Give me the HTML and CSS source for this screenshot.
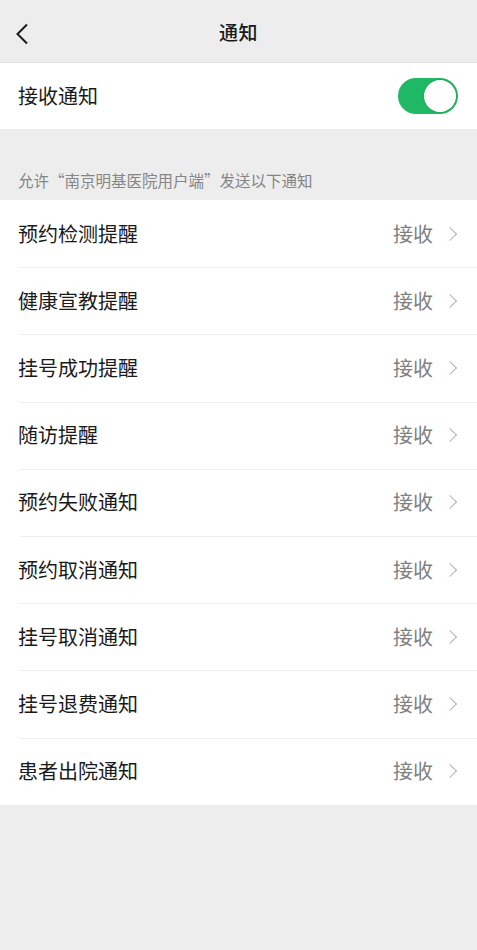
FILE: index.html
```html
<!DOCTYPE html>
<html>
<head>
  <meta charset="utf-8">
  <title>通知</title>
  <link rel="stylesheet" href="styles.css">
</head>
<body>
  <!-- Top bar -->
  <div class="topbar">
    <svg class="back" width="14" height="22" viewBox="0 0 14 22">
      <path d="M12 1.5 L2.5 11 L12 20.5" fill="none" stroke="#1a1a1a" stroke-width="2"/>
    </svg>
    <div class="title">通知</div>
  </div>

  <!-- Master switch -->
  <div class="switch-row">
    <span class="label">接收通知</span>
    <div class="toggle on"><div class="knob"></div></div>
  </div>

  <div class="caption">允许“南京明基医院用户端”发送以下通知</div>

  <!-- Notification list -->
  <div class="list">
    <div class="item"><span class="label">预约检测提醒</span><span class="value">接收</span><span class="arrow"></span></div>
    <div class="item"><span class="label">健康宣教提醒</span><span class="value">接收</span><span class="arrow"></span></div>
    <div class="item"><span class="label">挂号成功提醒</span><span class="value">接收</span><span class="arrow"></span></div>
    <div class="item"><span class="label">随访提醒</span><span class="value">接收</span><span class="arrow"></span></div>
    <div class="item"><span class="label">预约失败通知</span><span class="value">接收</span><span class="arrow"></span></div>
    <div class="item"><span class="label">预约取消通知</span><span class="value">接收</span><span class="arrow"></span></div>
    <div class="item"><span class="label">挂号取消通知</span><span class="value">接收</span><span class="arrow"></span></div>
    <div class="item"><span class="label">挂号退费通知</span><span class="value">接收</span><span class="arrow"></span></div>
    <div class="item"><span class="label">患者出院通知</span><span class="value">接收</span><span class="arrow"></span></div>
  </div>
</body>
</html>
```

FILE: styles.css
```css
/* notification settings page */
body {
  margin: 0;
  background-color: #ededed;
  font-family: "Noto Sans CJK SC", "Noto Sans", sans-serif;
  color: #1a1a1a;
}
.topbar {
  height: 62px;
  display: flex;
  align-items: center;
  justify-content: center;
  position: relative;
  border-bottom: 1px solid #e0e0e0;
}
.back {
  position: absolute;
  left: 15px;
  top: 23px;
}
.title {
  font-size: 19px;
  font-weight: 500;
  letter-spacing: 0.5px;
}
.switch-row {
  height: 66px;
  background-color: #fff;
  display: flex;
  align-items: center;
  justify-content: space-between;
  padding: 0 19px 0 18px;
}
.label {
  font-size: 20px;
  line-height: 1;
}
.toggle {
  width: 60px;
  height: 36px;
  border-radius: 18px;
  background-color: #e5e5e5;
  display: flex;
  align-items: center;
  padding: 0 2px;
  box-sizing: border-box;
}
.toggle.on {
  background-color: #1fb864;
  justify-content: flex-end;
}
.knob {
  width: 32px;
  height: 32px;
  border-radius: 50%;
  background-color: #fff;
  box-shadow: 0 0 0 1px rgba(0, 0, 0, 0.08);
}
.caption {
  padding: 40px 18px 9px;
  font-size: 15.5px;
  line-height: 22px;
  color: #858585;
}
.list {
  background-color: #fff;
}
.item {
  height: 67.2px;
  display: flex;
  align-items: center;
  padding: 0 22px 0 18px;
  position: relative;
  box-sizing: border-box;
}
.item + .item::before {
  content: "";
  position: absolute;
  left: 20px;
  right: 0;
  top: 0;
  border-top: 1px solid #efefef;
}
.item .label {
  flex: 1;
}
.value {
  font-size: 20px;
  color: #808080;
  line-height: 1;
}
.arrow {
  width: 9px;
  height: 9px;
  border-top: 1.5px solid #b5b5b5;
  border-right: 1.5px solid #b5b5b5;
  transform: rotate(45deg);
  margin-left: 12px;
}
```
